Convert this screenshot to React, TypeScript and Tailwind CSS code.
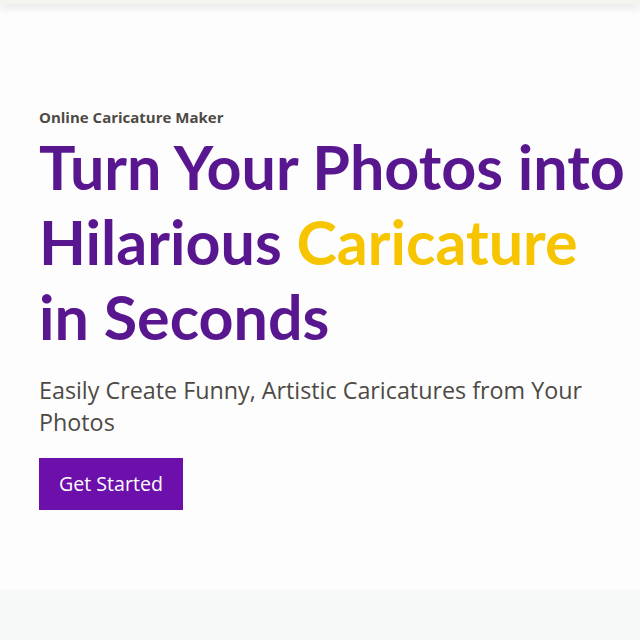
import React from 'react';

export default function App() {
  return (
    <div className="min-h-screen bg-[#fdfdfd] font-['Open_Sans',sans-serif]">
      <header className="h-1 bg-[#f4f3f0] shadow-[0_2px_10px_rgba(0,0,0,0.18)] relative z-10" />
      <section className="pl-[39px] pt-[101px] pb-[79px]">
        <p className="text-[15px] font-bold text-[#4d4a45] leading-[24px]">Online Caricature Maker</p>
        <h1 className="font-['Lato',sans-serif] text-[61px] font-bold leading-[75px] text-[#58168f] whitespace-nowrap">
          Turn Your Photos into
          <br />
          Hilarious <span className="text-[#f7c400]">Caricature</span>
          <br />
          in Seconds
        </h1>
        <p className="mt-[20px] text-[23.3px] leading-[32px] text-[#4d4a45]">
          Easily Create Funny, Artistic Caricatures from Your
          <br />
          Photos
        </p>
        <button className="mt-[20px] h-[52px] px-[20px] bg-[#6c0fab] text-white text-[19.6px]">Get Started</button>
      </section>
      <div className="h-[60px] bg-[#f7f9f8]" />
    </div>
  );
}
